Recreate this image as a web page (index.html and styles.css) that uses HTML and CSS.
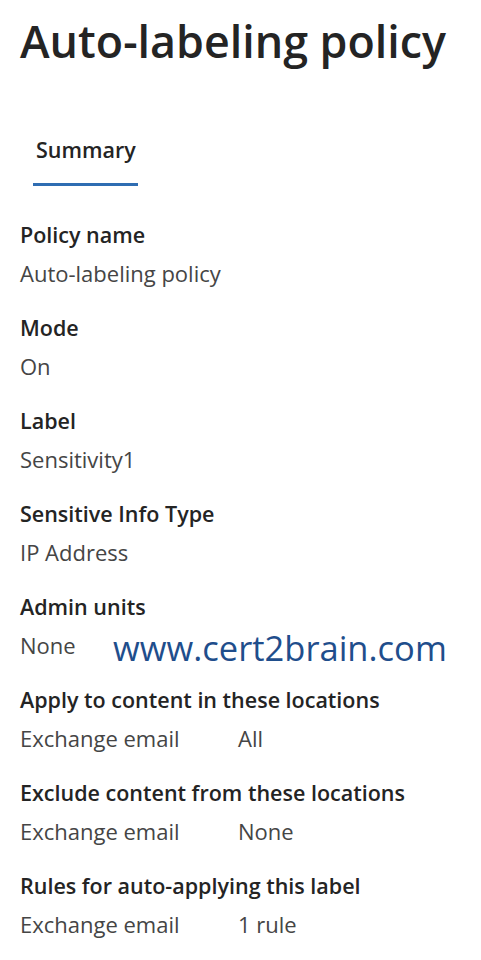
FILE: index.html
```html
<!DOCTYPE html>
<html lang="en">
<head>
<meta charset="UTF-8" />
<meta name="viewport" content="width=device-width, initial-scale=1" />
<title>Auto-labeling policy</title>
<link rel="stylesheet" href="styles.css">
</head>
<body>
<h1 class="page-title">Auto-labeling policy</h1>

<nav class="tabs">
  <div class="tab active">Summary</div>
</nav>

<div class="summary">
  <div class="field">
    <div class="field-label">Policy name</div>
    <div class="field-value">Auto-labeling policy</div>
  </div>
  <div class="field">
    <div class="field-label">Mode</div>
    <div class="field-value">On</div>
  </div>
  <div class="field">
    <div class="field-label">Label</div>
    <div class="field-value">Sensitivity1</div>
  </div>
  <div class="field">
    <div class="field-label">Sensitive Info Type</div>
    <div class="field-value">IP Address</div>
  </div>
  <div class="field watermarked">
    <div class="field-label">Admin units</div>
    <div class="field-value">None</div>
    <div class="watermark">www.cert2brain.com</div>
  </div>
  <div class="field">
    <div class="field-label">Apply to content in these locations</div>
    <div class="field-value pair"><span>Exchange email</span><span>All</span></div>
  </div>
  <div class="field">
    <div class="field-label">Exclude content from these locations</div>
    <div class="field-value pair"><span>Exchange email</span><span>None</span></div>
  </div>
  <div class="field">
    <div class="field-label">Rules for auto-applying this label</div>
    <div class="field-value pair"><span>Exchange email</span><span>1 rule</span></div>
  </div>
</div>
</body>
</html>
```

FILE: styles.css
```css
body {
  margin: 0;
  padding: 0 20px;
  background: #fff;
  color: #242424;
  font-family: 'Open Sans', 'Noto Sans', sans-serif;
}
.page-title {
  margin: 0;
  padding-top: 9px;
  font-size: 44.8px;
  font-weight: 600;
  line-height: 64px;
  white-space: nowrap;
  color: #242424;
}
.tabs {
  display: flex;
  margin-top: 62px;
  padding-left: 13px;
}
.tab {
  padding: 0 2px 18px 3px;
  font-size: 21.5px;
  font-weight: 600;
  line-height: 30px;
  color: #242424;
}
.tab.active {
  border-bottom: 3px solid #2f6db2;
}
.summary {
  margin-top: 35px;
}
.field {
  margin-bottom: 27px;
}
.field-label {
  font-size: 21.5px;
  font-weight: 600;
  line-height: 28px;
  margin-bottom: 10px;
}
.field-value {
  font-size: 22px;
  line-height: 28px;
  color: #454545;
}
.pair {
  display: grid;
  grid-template-columns: 218px auto;
}
.watermarked {
  position: relative;
}
.watermark {
  position: absolute;
  left: 93px;
  top: 38px;
  font-size: 34.5px;
  line-height: 1;
  color: #1f4e8c;
}
```
